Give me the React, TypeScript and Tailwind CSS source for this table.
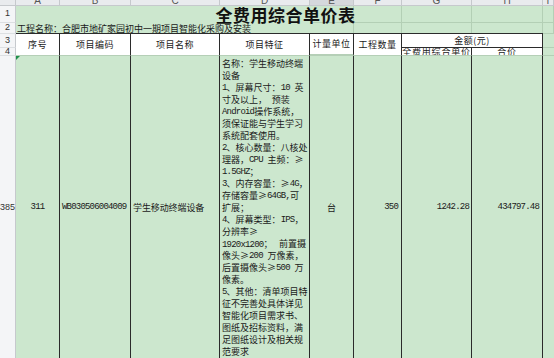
import React from "react";

const letters = ["A", "B", "C", "D", "E", "F", "G", "H", "I"];
const letterCol = [
  "col-start-2",
  "col-start-3",
  "col-start-4",
  "col-start-5",
  "col-start-6",
  "col-start-7",
  "col-start-8",
  "col-start-9",
  "col-start-10",
];

const spec = [
  "名称：学生移动终端",
  "设备",
  "1、屏幕尺寸：10 英",
  "寸及以上， 预装",
  "Android操作系统，",
  "须保证能与学生学习",
  "系统配套使用。",
  "2、核心数量：八核处",
  "理器，CPU 主频：≥",
  "1.5GHZ；",
  "3、内存容量：≥4G，",
  "存储容量≥64GB,可",
  "扩展；",
  "4、屏幕类型：IPS，",
  "分辨率≥",
  "1920x1200；|前置摄",
  "像头≥200 万像素，",
  "后置摄像头≥500 万",
  "像素。",
  "5、其他：清单项目特",
  "征不完善处具体详见",
  "智能化项目需求书、",
  "图纸及招标资料，满",
  "足图纸设计及相关规",
  "范要求",
];

// ascii runs look like SimSun half-width, so squeeze a mono face
function mixed(s: string) {
  return s
    .split(/([\x20-\x7e]+)/)
    .filter(Boolean)
    .map((p, i) =>
      /^[\x20-\x7e]+$/.test(p) ? (
        <span key={i} className="font-['Liberation_Mono',monospace] tracking-[-0.8px]">
          {p}
        </span>
      ) : (
        <span key={i}>{p}</span>
      )
    );
}

function SpecLine({ line }: { line: string }) {
  if (line.includes("|")) {
    const [a, b] = line.split("|");
    return (
      <div className="flex h-[12px] items-center justify-between pr-[3px]">
        <span>{mixed(a)}</span>
        <span>{mixed(b)}</span>
      </div>
    );
  }
  return <div className="flex h-[12px] items-center whitespace-pre">{mixed(line)}</div>;
}

const rowHdr =
  "col-start-1 flex items-center justify-center overflow-visible border-r border-b border-r-[#c6c9cd] border-b-[#dcdfe2] bg-[#f4f5f7] font-['Liberation_Sans',sans-serif] text-[9px] text-[#333]";
const hdrCell =
  "row-start-4 row-span-2 flex items-center justify-center overflow-hidden border-r border-b border-r-[#2b2b2b] border-b-[#b5cfb7] bg-white text-[9px] tracking-[0.5px]";
const faint = "border-r border-[#b3cfb5]";

export default function App() {
  return (
    <div className="relative h-[358px] w-[554px] overflow-hidden bg-[#cce7ce] font-['Noto_Sans_CJK_SC',sans-serif] text-[#1a1a1a]">
      <div className="grid grid-cols-[16px_44px_71px_89px_90px_44px_48px_70px_71px_1fr] grid-rows-[6px_17px_11px_14px_8px_304px]">
        {/* column letters */}
        <div className="col-start-1 row-start-1 border-r border-b border-[#c6c9cd] bg-[#e9ebee]" />
        {letters.map((l, i) => (
          <div
            key={l}
            className={`${letterCol[i]} row-start-1 flex items-end justify-center overflow-hidden border-r border-b border-[#c6c9cd] ${
              l === "E" ? "bg-[#d5d8dc]" : "bg-[#e9ebee]"
            }`}
          >
            <span className="-mb-[1px] font-['Liberation_Sans',sans-serif] text-[10px] leading-[10px] text-[#555]">
              {l}
            </span>
          </div>
        ))}

        {/* row numbers */}
        <div className={`${rowHdr} row-start-2`}>1</div>
        <div className={`${rowHdr} row-start-3`}>2</div>
        <div className={`${rowHdr} row-start-4`}>3</div>
        <div className={`${rowHdr} row-start-5 border-b-[#9ea3a8]`}>4</div>
        <div className={`${rowHdr} row-start-6 whitespace-nowrap`}>385</div>

        {/* faint grid behind rows 1-2 */}
        <div className={`col-start-6 row-start-2 border-b ${faint}`} />
        <div className={`col-start-7 row-start-2 border-b ${faint}`} />
        <div className={`col-start-8 row-start-2 border-b ${faint}`} />
        <div className={`col-start-9 row-start-2 border-b ${faint}`} />
        <div className={`col-start-10 row-start-2 border-b ${faint}`} />
        <div className={`col-start-6 row-start-3 ${faint}`} />
        <div className={`col-start-7 row-start-3 ${faint}`} />
        <div className={`col-start-8 row-start-3 ${faint}`} />
        <div className={`col-start-9 row-start-3 ${faint}`} />
        <div className={`col-start-10 row-start-3 border-b ${faint}`} />

        {/* title */}
        <div className="col-start-2 col-span-8 row-start-2 flex items-center justify-center pl-[12px] text-[17px] font-bold leading-none tracking-[0.5px] text-[#111]">
          全费用综合单价表
        </div>
        <div className="col-start-2 col-span-8 row-start-3 flex items-center whitespace-nowrap border-b border-[#2b2b2b] pl-[1px] text-[9px] leading-none">
          工程名称：合肥市地矿家园初中一期项目智能化采购及安装
        </div>

        {/* table head */}
        <div className={`${hdrCell} col-start-2`}>序号</div>
        <div className={`${hdrCell} col-start-3`}>项目编码</div>
        <div className={`${hdrCell} col-start-4`}>项目名称</div>
        <div className={`${hdrCell} col-start-5`}>项目特征</div>
        <div className={`${hdrCell} col-start-6 border-b-2 border-b-[#2f9b57]`}>计量单位</div>
        <div className={`${hdrCell} col-start-7`}>工程数量</div>
        <div className="col-start-8 col-span-2 row-start-4 flex items-center justify-center border-r border-b border-[#2b2b2b] bg-white text-[9px] tracking-[0.5px]">
          金额(元)
        </div>
        <div className="col-start-8 row-start-5 flex items-center justify-center overflow-hidden border-r border-b border-r-[#2b2b2b] border-b-[#b5cfb7] bg-white text-[9px] leading-[9px] tracking-[0.8px]">
          全费用综合单价
        </div>
        <div className="col-start-9 row-start-5 flex items-center justify-center overflow-hidden border-r border-b border-r-[#2b2b2b] border-b-[#b5cfb7] bg-white text-[9px] leading-[9px] tracking-[0.8px]">
          合价
        </div>
        <div className="col-start-10 row-start-4 border-b border-[#b3cfb5]" />
        <div className="col-start-10 row-start-5 border-b border-[#b3cfb5]" />

        {/* data row */}
        <div className="relative col-start-2 row-start-6 flex items-center justify-center border-r border-[#2b2b2b] text-[9px]">
          {mixed("311")}
          <span className="absolute top-0 left-0 h-0 w-0 border-t-[4px] border-r-[4px] border-t-[#1f8f4a] border-r-transparent" />
        </div>
        <div className="col-start-3 row-start-6 flex items-center border-r border-[#2b2b2b] pl-[2px] text-[9px]">
          {mixed("WB030506004009")}
        </div>
        <div className="col-start-4 row-start-6 flex items-center border-r border-[#2b2b2b] pl-[2px] text-[9px] tracking-[-0.1px]">
          学生移动终端设备
        </div>
        <div className="col-start-5 row-start-6 flex flex-col justify-center border-r border-[#2b2b2b] pl-[2px] text-[9px] leading-[12px]">
          {spec.map((l, i) => (
            <SpecLine key={i} line={l} />
          ))}
        </div>
        <div className="col-start-6 row-start-6 flex items-center justify-center border-r border-[#2b2b2b] text-[9px]">
          台
        </div>
        <div className="col-start-7 row-start-6 flex items-center justify-end border-r border-[#2b2b2b] pr-[3px] text-[9px]">
          {mixed("350")}
        </div>
        <div className="col-start-8 row-start-6 flex items-center justify-end border-r border-[#2b2b2b] pr-[2px] text-[9px]">
          {mixed("1242.28")}
        </div>
        <div className="col-start-9 row-start-6 flex items-center justify-end border-r border-[#2b2b2b] pr-[3px] text-[9px]">
          {mixed("434797.48")}
        </div>
      </div>
    </div>
  );
}
